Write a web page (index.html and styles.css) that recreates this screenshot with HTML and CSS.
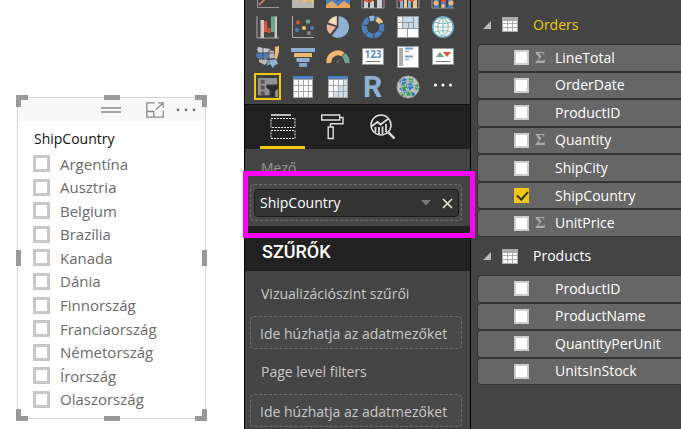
FILE: index.html
```html
<!DOCTYPE html>
<html lang="hu">
<head>
<meta charset="utf-8">
<meta name="viewport" content="width=device-width, initial-scale=1">
<title>ShipCountry szeletelő</title>
<link rel="stylesheet" href="styles.css">
</head>
<body>
<main class="app">
  <section class="canvas">
    <div class="slicer">
      <header class="slicer-bar">
        <svg class="grip" viewBox="0 0 20 6" aria-hidden="true"><path d="M0 1h20M0 5h20" stroke="#8a8a8a" stroke-width="1.4"/></svg>
        <button class="bar-button" aria-label="Fókusz mód"><svg viewBox="0 0 18 16" width="18" height="16" fill="none" stroke="#8a8a8a"><path d="M9 .8H.8v14.4h16.4V8.500M.8 9.500h7v5.700M10 7.500l6.500-6M12 .8h5.200v5" stroke-width="1.300"/></svg></button>
        <button class="bar-button" aria-label="További beállítások"><svg viewBox="0 0 20 4" width="20" height="4" fill="#777"><circle cx="2" cy="2" r="1.400"/><circle cx="10" cy="2" r="1.400"/><circle cx="18" cy="2" r="1.400"/></svg></button>
      </header>
      <h2 class="slicer-title">ShipCountry</h2>
      <div class="slicer-list">
        <label><input type="checkbox">Argentína</label>
        <label><input type="checkbox">Ausztria</label>
        <label><input type="checkbox">Belgium</label>
        <label><input type="checkbox">Brazília</label>
        <label><input type="checkbox">Kanada</label>
        <label><input type="checkbox">Dánia</label>
        <label><input type="checkbox">Finnország</label>
        <label><input type="checkbox">Franciaország</label>
        <label><input type="checkbox">Németország</label>
        <label><input type="checkbox">Írország</label>
        <label><input type="checkbox">Olaszország</label>
      </div>
      <i class="handle corner tl"></i><i class="handle corner tr"></i>
      <i class="handle corner bl"></i><i class="handle corner br"></i>
      <i class="handle edge-t"></i><i class="handle edge-b"></i>
      <i class="handle edge-l"></i><i class="handle edge-r"></i>
    </div>
  </section>

  <section class="visuals">
    <div class="gallery">
      <button aria-label="Vonaldiagram"><svg viewBox="0 0 24 24"><path d="M1.500 0v22.500H23" fill="none" stroke="#999"/><path d="M3 20l6-6 5-3 6-9" fill="none" stroke="#c47a68" stroke-width="2"/></svg></button>
      <button aria-label="Területdiagram"><svg viewBox="0 0 24 24"><path d="M1 0h22v23H1z" fill="#b8b8b0"/><path d="M1 17l7-2 5 4 4-3 6 4V0H1z" fill="#b8b8b0"/><path d="M5 16l5-2 4 4 4-3 5 4v-9H5z" fill="#efb872"/></svg></button>
      <button aria-label="Halmozott területdiagram"><svg viewBox="0 0 24 24"><path d="M0 10h24v13H0z" fill="#4a80bb"/><path d="M0 20l6-4 6 5 6-5 6 4v3H0z" fill="#e9a55c"/><path d="M0 10h24v4l-6-3-6 5-6-4-6 3z" fill="#444"/></svg></button>
      <button aria-label="Vonal- és halmozott oszlopdiagram"><svg viewBox="0 0 24 24"><path d="M1 0v23h22V0" fill="none" stroke="#999"/><path d="M3 13h4v10H3zM9 16h4v7H9zM16 11h5v12h-5z" fill="#cfcfcf"/><path d="M3 15l6 2 5-4 7-1" stroke="#d65c42" stroke-width="2" fill="none"/></svg></button>
      <button aria-label="Vonal- és csoportosított oszlopdiagram"><svg viewBox="0 0 24 24"><path d="M1 0v23h22V0" fill="none" stroke="#999"/><path d="M4 12h3v11H4zM12 15h3v8h-3z" fill="#8eb1d6"/><path d="M8 14h3v9H8zM17 12h4v11h-4z" fill="#f0c58a"/><path d="M3 16l7-3 6 3 5-3" stroke="#d65c42" stroke-width="2" fill="none"/></svg></button>
      <button aria-label="Menüszalagdiagram"><svg viewBox="0 0 24 24"><path d="M1 0v23h22" fill="none" stroke="#999"/><path d="M3 12h5v11H3zM17 12h5v11h-5zM10 15h5v8h-5z" fill="#4a80bb"/><circle cx="5" cy="18" r="2.500" fill="#efb872"/><circle cx="12.500" cy="15" r="2.500" fill="#d65c42"/><circle cx="12" cy="21" r="2" fill="#efb872"/><circle cx="20" cy="18" r="2.500" fill="#efb872"/></svg></button>

      <button aria-label="Vízesésdiagram"><svg viewBox="0 0 24 24"><path d="M1 1v22h22" fill="none" stroke="#aaa"/><path d="M4.500 5H8v18H4.500zM18.500 1.500H21V23h-2.500z" fill="#c8c8c8"/><path d="M8 6h3v11H8zM11.500 13h3v5h-3z" fill="#d8563a"/><path d="M15 1.500h4V17h-4z" fill="#6da68b"/></svg></button>
      <button aria-label="Pontdiagram"><svg viewBox="0 0 24 24"><path d="M1.500 1v21.500H23" fill="none" stroke="#aaa"/><circle cx="7" cy="7.500" r="2" fill="#d8563a"/><circle cx="17" cy="6.500" r="2.200" fill="#6da68b"/><circle cx="6" cy="15" r="2" fill="#4a80bb"/><circle cx="13" cy="13" r="2.100" fill="#efc27e"/><circle cx="21" cy="13" r="1.900" fill="#4a80bb"/><circle cx="18" cy="18" r="2" fill="#8a8a8a"/></svg></button>
      <button aria-label="Tortadiagram"><svg viewBox="0 0 24 24"><path d="M12.500 12V1.200A10.800 10.800 0 1 1 5.800 20.700z" fill="#8eb1d6"/><path d="M10.800 10.500V1A11 11 0 0 0 2 7.500z" fill="#f3dcb4"/><path d="M10 12L1 9.300a11 11 0 0 0 3 10z" fill="#e9b1a0"/></svg></button>
      <button aria-label="Perecdiagram"><svg viewBox="0 0 24 24" fill="none" stroke-width="5"><circle cx="12" cy="12" r="8.800" stroke="#4a80bb"/><path d="M8.500 3.900A8.800 8.800 0 0 1 14 3.400" stroke="#8eb1d6"/><path d="M15.600 4A8.800 8.800 0 0 1 20 8.300" stroke="#efc27e"/><path d="M7 0l2 8M14.500 0l-1.500 8M23 8l-8 2M2 10l7 1M4 20l5-5M13 24l-.500-8M22 18l-7-4" stroke="#444" stroke-width="1"/></svg></button>
      <button aria-label="Fatérkép"><svg viewBox="0 0 24 24"><path d="M1 1h22v22H1z" fill="#999"/><path d="M2 2h4v5H2zM2 8h4v5H2zM2 14h9v8H2zM12 14h10v8H12z" fill="#fff"/><path d="M7 2h10v5H7zM7 8h5v5H7zM13 8h4v5h-4zM18 2h4v11h-4z" fill="#c5dbec"/></svg></button>
      <button aria-label="Térkép"><svg viewBox="0 0 24 24"><circle cx="12" cy="12" r="10.300" fill="#fff" stroke="#6ba4c9" stroke-width="1.600"/><path d="M12 2v20M2 12h20M4 7c4 2 12 2 16 0M4 17c4-2 12-2 16 0M12 2C5 7 5 17 12 22M12 2c7 5 7 15 0 20" fill="none" stroke="#8dbdb0" stroke-width="1.200"/></svg></button>

      <button aria-label="Kartogram"><svg viewBox="0 0 24 24"><path d="M2 2l6 1 6 1-1 5-10-1-2-3z" fill="#c8c8c8"/><path d="M1 7l6 1 5-1 1 7-6-1-5 1-2-4z" fill="#4a80bb"/><path d="M12 5l6 1 1 7-6 1zM3 14l7-1 2 3-3 4-6-3z" fill="#b8b8b8"/><path d="M19 2l4-1v6l-2 7h-2z" fill="#efb872"/><path d="M12 15l8-1 2 5-3 1-2 3-3-4-3 2z" fill="#8eb1d6"/><path d="M1 8h17M7 2v13M13 5v13M3 14h17" stroke="#444" stroke-width=".8"/></svg></button>
      <button aria-label="Tölcsér"><svg viewBox="0 0 24 24"><path d="M0 3h24v4H0z" fill="#8eb1d6"/><path d="M3 8h18v4H3z" fill="#efb872"/><path d="M5.500 13h13v4h-13z" fill="#8eb1d6"/><path d="M8 18h8v4H8z" fill="#79a4d0"/></svg></button>
      <button aria-label="Mérő"><svg viewBox="0 0 24 24"><path d="M3 18a9 9 0 0 1 14-8.500" fill="none" stroke="#efb872" stroke-width="5"/><path d="M17.500 10A9 9 0 0 1 21 18" fill="none" stroke="#6da68b" stroke-width="5"/><path d="M10 17l6-4-4 5z" fill="#666"/></svg></button>
      <button aria-label="Kártya"><svg viewBox="0 0 24 24"><path d="M1.500 3.500h21v16h-21z" fill="#fff" stroke="#999"/><text x="12" y="13" class="digits">123</text><path d="M5 16.500h14" stroke="#777"/></svg></button>
      <button aria-label="Többsoros kártya"><svg viewBox="0 0 24 24"><path d="M1.500 1.500h21v21h-21z" fill="#fff" stroke="#999"/><path d="M3 3h4v18H3z" fill="#aaa"/><path d="M9 3.500h8M9 11.500h8" stroke="#6f9dcc" stroke-width="2.200"/><path d="M9 6.500h4M9 14.500h4" stroke="#aaa" stroke-width="1.500"/></svg></button>
      <button aria-label="KPI"><svg viewBox="0 0 24 24"><path d="M1.500 3.500h21v16h-21z" fill="#fff" stroke="#999"/><path d="M5 12l4-5 4 5z" fill="#6da68b"/><path d="M12 7h8l-4 5z" fill="#d8563a"/><path d="M5 16.500h14" stroke="#777"/></svg></button>

      <button class="selected" aria-label="Szeletelő"><svg viewBox="0 0 24 24"><path d="M1 1h22v22H1z" fill="#3b3b3b"/><path d="M2 3h20v7H11v3l3 3v5H2z" fill="#929292"/><path d="M5 5h4v4H5zM5 11h4v4H5zM5 17h4v4H5z" fill="#555"/><path d="M11 11h12v2l-4 4v6h-3v-6l-5-4z" fill="#2d2d2d"/><path d="M20 17l3-3v9h-3z" fill="#929292"/></svg></button>
      <button aria-label="Tábla"><svg viewBox="0 0 24 24"><path d="M2 1h20v22H2z" fill="#a5a5a5"/><path d="M2 1h20v3H2z" fill="#4a80bb"/><path d="M3 5h4v5H3zM8 5h4v5H8zM13 5h4v5h-4zM18 5h3v5h-3zM3 11h4v5H3zM8 11h4v5H8zM13 11h4v5h-4zM18 11h3v5h-3zM3 17h4v5H3zM8 17h4v5H8zM13 17h4v5h-4zM18 17h3v5h-3z" fill="#fff"/></svg></button>
      <button aria-label="Mátrix"><svg viewBox="0 0 24 24"><path d="M2 1h20v22H2z" fill="#a5a5a5"/><path d="M2 1h20v3H2z" fill="#4a80bb"/><path d="M3 5h4v5H3zM8 5h4v5H8zM13 5h4v5h-4zM3 11h4v5H3zM8 11h4v5H8zM3 17h4v5H3z" fill="#fff"/><path d="M18 5h3v5h-3zM13 11h4v5h-4zM18 11h3v5h-3zM8 17h4v5H8zM13 17h4v5h-4zM18 17h3v5h-3z" fill="#cfe0f0"/></svg></button>
      <button class="r-visual" aria-label="R-szkriptvizualizáció">R</button>
      <button aria-label="ArcGIS térkép"><svg viewBox="0 0 24 24"><circle cx="12" cy="12" r="11" fill="#bfc4c1" stroke="#999"/><path d="M3 7l4-4 4 1-1 4-4 3zM10 9l5-1 3 4-4 3-4-2zM3 13l4-1 4 4-3 3zM14 18l4-1 1 3-3 2z" fill="#2477bb"/><path d="M12 3l5 1 1 4-5-1zM17 11l5-2v5l-3 2zM7 9l4 3-3 3-4-3zM10 16l5-1 1 5-5 1zM4 17l4 1 2 4-4-1z" fill="#34a053"/><path d="M2 9c6-4 14-4 19-2M1 14c7-4 15-4 22-1M4 19c5-4 12-4 17-1M7 2c-3 6-2 14 2 20M13 1c-3 7-1 15 4 21M18 3c-1 6 0 11 3 15" fill="none" stroke="#b5bab7" stroke-width="1.100"/></svg></button>
      <button aria-label="További vizualizációk"><svg viewBox="0 0 24 24" fill="#fff"><circle cx="4.500" cy="10" r="1.500"/><circle cx="12" cy="10" r="1.500"/><circle cx="19.500" cy="10" r="1.500"/></svg></button>
    </div>

    <nav class="tabs">
      <button class="tab active" aria-label="Mezők"><svg width="26" height="26" viewBox="0 0 26 26" fill="none" stroke="#e8e8e8"><path d="M1 1h20" stroke="#bbb" stroke-width="2"/><path d="M1 4.500h24v9H1zM1 16.500h24v8H1z" stroke-dasharray="2 1"/></svg></button>
      <button class="tab" aria-label="Formátum"><svg width="26" height="26" viewBox="0 0 26 26" fill="none" stroke="#ddd" stroke-width="1.400"><path d="M1.700 1h18v5h-18zM19.700 3.500H23v6.300H10.500V13M8.200 13h5v11.500h-5z"/></svg></button>
      <button class="tab" aria-label="Elemzés"><svg width="26" height="26" viewBox="0 0 26 26" fill="none" stroke="#ddd"><circle cx="11" cy="11" r="10" stroke-width="1.500"/><path d="M1.500 12.500L7.500 8l3 2.500L18 5" stroke-width="1.800"/><path d="M5.500 18v-5M9 20v-7M12.500 20v-7.500M16 18v-8" stroke-width="1.800"/><path d="M18 18l6.500 6.500" stroke-width="2.400"/></svg></button>
    </nav>

    <section class="field-section">
      <h3 class="label muted">Mező</h3>
      <div class="well filled">
        <div class="chip"><span>ShipCountry</span>
          <button class="chip-button" aria-label="Menü"><svg width="10" height="6" viewBox="0 0 10 6"><path d="M0 0h10L5 5.500z" fill="#777"/></svg></button>
          <button class="chip-button" aria-label="Eltávolítás"><svg width="11" height="11" viewBox="0 0 11 11"><path d="M1 1l9 9M10 1l-9 9" stroke="#f4ede0" stroke-width="1.500"/></svg></button>
        </div>
      </div>
      <div class="highlight"></div>
    </section>

    <h2 class="filters-title">SZŰRŐK</h2>
    <section class="filters">
      <h3 class="label">Vizualizációszint szűrői</h3>
      <div class="well">Ide húzhatja az adatmezőket</div>
      <h3 class="label">Page level filters</h3>
      <div class="well">Ide húzhatja az adatmezőket</div>
    </section>
  </section>

  <section class="fields">
    <h3 class="table-name used">
      <svg width="8" height="8" viewBox="0 0 8 8"><path d="M8 0v8H0z" fill="#b8bcc0"/></svg>
      <svg width="16" height="15" viewBox="0 0 16 15"><path d="M0 0h16v15H0z" fill="#aaa"/><path d="M1 4h4v2H1zM6 4h4v2H6zM11 4h4v2h-4zM1 7h4v3H1zM6 7h4v3H6zM11 7h4v3h-4zM1 11h4v3H1zM6 11h4v3H6zM11 11h4v3h-4z" fill="#fff"/></svg>
      <span>Orders</span>
    </h3>
    <div class="field-list orders">
      <label><input type="checkbox"><i class="sum">Σ</i>LineTotal</label>
      <label><input type="checkbox"><i class="sum"></i>OrderDate</label>
      <label><input type="checkbox"><i class="sum"></i>ProductID</label>
      <label><input type="checkbox"><i class="sum">Σ</i>Quantity</label>
      <label><input type="checkbox"><i class="sum"></i>ShipCity</label>
      <label><input type="checkbox" checked><i class="sum"></i>ShipCountry</label>
      <label><input type="checkbox"><i class="sum">Σ</i>UnitPrice</label>
    </div>
    <h3 class="table-name">
      <svg width="8" height="8" viewBox="0 0 8 8"><path d="M8 0v8H0z" fill="#b8bcc0"/></svg>
      <svg width="16" height="15" viewBox="0 0 16 15"><path d="M0 0h16v15H0z" fill="#aaa"/><path d="M1 4h4v2H1zM6 4h4v2H6zM11 4h4v2h-4zM1 7h4v3H1zM6 7h4v3H6zM11 7h4v3h-4zM1 11h4v3H1zM6 11h4v3H6zM11 11h4v3h-4z" fill="#fff"/></svg>
      <span>Products</span>
    </h3>
    <div class="field-list products">
      <label><input type="checkbox"><i class="sum"></i>ProductID</label>
      <label><input type="checkbox"><i class="sum"></i>ProductName</label>
      <label><input type="checkbox"><i class="sum"></i>QuantityPerUnit</label>
      <label><input type="checkbox"><i class="sum"></i>UnitsInStock</label>
    </div>
  </section>
</main>
</body>
</html>
```
FILE: styles.css
```css
* { box-sizing: border-box; }

body {
  margin: 0;
  background: #fff;
  font: 14px/20px "Open Sans", "Noto Sans", sans-serif;
  color: #fff;
}

h2, h3 { margin: 0; font-size: 14px; font-weight: 400; }

button {
  padding: 0;
  border: 0;
  background: none;
  color: inherit;
  font: inherit;
}

svg { display: block; flex: none; }

input[type="checkbox"] {
  appearance: none;
  flex: none;
  margin: 0;
  background: #fff;
}

.app {
  display: grid;
  grid-template-columns: 244fr 226fr 211fr;
  height: 100vh;
  overflow: hidden;
}

/* Slicer on the report canvas */
.canvas { padding: 97px 38px 0 17px; }

.slicer {
  position: relative;
  border: 1px solid #d4d4d4;
  padding-bottom: 7px;
}

.slicer-bar {
  display: grid;
  grid-template-columns: 83px 20px 1fr auto auto;
  align-items: center;
  height: 23px;
  padding-right: 9px;
  background: #f8f8f8;
}

.grip { grid-column: 2; width: 20px; height: 6px; }
.bar-button:nth-of-type(1) { grid-column: 4; margin-right: 12px; }
.bar-button:nth-of-type(2) { grid-column: 5; }

.slicer-title {
  padding: 8px 16px 3px;
  color: #111;
  line-height: 20px;
}

.slicer-list {
  display: grid;
  grid-auto-rows: 1fr;
  height: 259px;
  padding-left: 15px;
  color: #6a6a6a;
  font-size: 15px;
}

.slicer-list label { display: flex; align-items: center; gap: 10px; }
.slicer-list input { width: 17px; height: 17px; border: 3px solid #c8c8c8; }

.handle { position: absolute; border: 0 solid #999; }
.corner { width: 12px; height: 12px; }
.tl { top: -3px; left: -2px; border-width: 5px 0 0 5px; }
.tr { top: -3px; right: -2px; border-width: 5px 5px 0 0; }
.bl { bottom: -3px; left: -2px; border-width: 0 0 5px 5px; }
.br { bottom: -3px; right: -2px; border-width: 0 5px 5px 0; }
.edge-t, .edge-b { left: calc(50% - 8px); width: 16px; border-top-width: 5px; }
.edge-t { top: -3px; }
.edge-b { bottom: -3px; }
.edge-l, .edge-r { top: calc(50% - 8px); height: 16px; border-left-width: 5px; }
.edge-l { left: -2px; }
.edge-r { right: -2px; }

/* Visualizations pane */
.visuals {
  border-left: 1px solid #000;
  background: #444;
  color: #c8c8c8;
}

.gallery {
  display: grid;
  grid-template-columns: repeat(6, 27px);
  grid-auto-rows: 27px;
  gap: 3px 8px;
  align-content: end;
  height: 105px;
  padding: 0 9px 4px;
  border-bottom: 1px solid #111;
  overflow: hidden;
}

.gallery button { display: grid; place-items: center; }
.gallery svg { width: 24px; height: 24px; }
.gallery .selected { border: 2px solid #f2c811; }
.gallery .selected svg { width: 23px; height: 23px; }
.digits { fill: #5b8fc4; font: 700 10px "Open Sans", sans-serif; text-anchor: middle; }
.gallery .r-visual { color: #8eb1d6; font: 700 30px/27px Roboto, sans-serif; }

.tabs {
  display: flex;
  gap: 5px;
  height: 44px;
  padding-left: 15px;
  background: #212121;
}

.tab {
  display: grid;
  justify-items: center;
  align-content: start;
  width: 45px;
  padding-top: 9px;
  border-bottom: 3px solid transparent;
}

.tab.active { border-bottom-color: #f2c811; }

.field-section { position: relative; height: 77px; padding: 9px 8px 0 5px; }
.label { padding-left: 11px; line-height: 20px; }
.label.muted { color: #999; }

.well {
  height: 33px;
  padding: 7px 9px;
  border: 1px dashed #6c6c6c;
  border-radius: 4px;
  background: #484848;
  white-space: nowrap;
}

.well.filled { height: 37px; margin-top: 6px; padding: 4px 2px 4px 3px; }

.chip {
  display: flex;
  align-items: center;
  gap: 11px;
  height: 28px;
  padding: 0 5px;
  border: 1px solid #1c1c1c;
  border-radius: 4px;
  background: #333;
  color: #fff;
}

.chip span { flex: 1; }

.highlight {
  position: absolute;
  z-index: 2;
  top: 22px;
  right: -5px;
  left: -2px;
  height: 67px;
  border: 5px solid #f0f;
  pointer-events: none;
}

.filters-title {
  height: 45px;
  padding: 14px 17px 0;
  background: #212121;
  color: #fff;
  font: 500 18px/24px Roboto, sans-serif;
}

.filters { padding: 13px 8px 0 5px; }
.filters .well { margin: 12px 0 13px; }

/* Fields pane */
.fields {
  border-left: 1px solid #000;
  padding-left: 6px;
  background: #444;
}

.table-name {
  display: flex;
  align-items: center;
  height: 38px;
  padding-left: 6px;
}

.table-name svg + svg { margin: 0 15px 0 11px; }
.table-name.used { height: 44px; padding-top: 5px; color: #f2c811; }

.field-list { display: grid; grid-auto-rows: 1fr; }
.orders { height: 193px; }
.products { height: 110px; }

.field-list label {
  display: flex;
  align-items: center;
  padding-left: 36px;
  border: 1px solid #333;
  border-right: 0;
  border-radius: 4px 0 0 4px;
  background: #666;
}

.field-list input { width: 15px; height: 15px; border: 2px solid #ccc; }

.field-list input:checked {
  border: 0;
  background: #f2c811;
}

.field-list input:checked::before {
  content: "";
  display: block;
  width: 5px;
  height: 9px;
  margin: 1px 5px;
  border: solid #333;
  border-width: 0 2px 2px 0;
  rotate: 42deg;
}

.sum {
  width: 26px;
  padding-left: 6px;
  color: #aaa;
  font: 700 16px/20px "Liberation Serif", serif;
}
```
